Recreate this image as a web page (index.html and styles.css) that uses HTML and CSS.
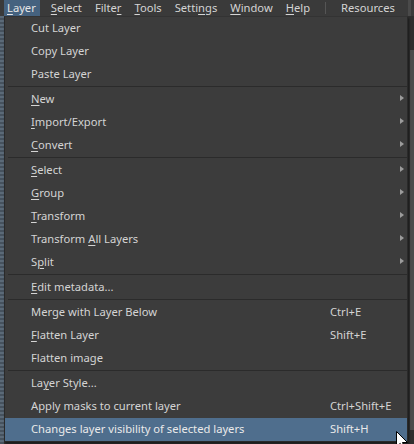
FILE: index.html
```html
<!DOCTYPE html>
<html>
<head>
<meta charset="utf-8">
<link rel="stylesheet" href="styles.css">
</head>
<body>
<div class="menubar">
  <span class="mb-item active"><u>L</u>ayer</span>
  <span class="mb-item"><u>S</u>elect</span>
  <span class="mb-item">Filte<u>r</u></span>
  <span class="mb-item"><u>T</u>ools</span>
  <span class="mb-item">Setti<u>n</u>gs</span>
  <span class="mb-item"><u>W</u>indow</span>
  <span class="mb-item"><u>H</u>elp</span>
  <span class="mb-sep"></span>
  <span class="mb-item">Resources</span>
  <span class="mb-tail"></span>
</div>
<div class="workspace">
  <div class="left-strip"></div>
  <div class="menu">
    <div class="row"><span class="label">Cut Layer</span></div>
    <div class="row"><span class="label">Copy Layer</span></div>
    <div class="row"><span class="label">Paste Layer</span></div>
    <div class="sep"></div>
    <div class="row"><span class="label"><u>N</u>ew</span><span class="arrow"></span></div>
    <div class="row"><span class="label"><u>I</u>mport/Export</span><span class="arrow"></span></div>
    <div class="row"><span class="label"><u>C</u>onvert</span><span class="arrow"></span></div>
    <div class="sep"></div>
    <div class="row"><span class="label"><u>S</u>elect</span><span class="arrow"></span></div>
    <div class="row"><span class="label"><u>G</u>roup</span><span class="arrow"></span></div>
    <div class="row"><span class="label"><u>T</u>ransform</span><span class="arrow"></span></div>
    <div class="row"><span class="label">Transform <u>A</u>ll Layers</span><span class="arrow"></span></div>
    <div class="row"><span class="label">S<u>p</u>lit</span><span class="arrow"></span></div>
    <div class="sep"></div>
    <div class="row"><span class="label"><u>E</u>dit metadata...</span></div>
    <div class="sep"></div>
    <div class="row"><span class="label">Merge with Layer Below</span><span class="key">Ctrl+E</span></div>
    <div class="row"><span class="label"><u>F</u>latten Layer</span><span class="key">Shift+E</span></div>
    <div class="row"><span class="label">Flatten image</span></div>
    <div class="sep"></div>
    <div class="row"><span class="label">La<u>y</u>er Style...</span></div>
    <div class="row"><span class="label">Apply masks to current layer</span><span class="key">Ctrl+Shift+E</span></div>
    <div class="row hover"><span class="label">Changes layer visibility of selected layers</span><span class="key">Shift+H</span>
      <svg class="cursor" width="14" height="20" viewBox="0 0 14 20"><path d="M0.5 0.5 L0.5 16 L4.2 12.4 L6.8 18.5 L9 17.5 L6.5 11.5 L11.5 11.5 Z" fill="#fff" stroke="#000" stroke-width="1"/></svg>
    </div>
  </div>
  <div class="right-area">
    <div class="scroll-track"><div class="scroll-thumb"></div></div>
  </div>
</div>
</body>
</html>
```
FILE: styles.css
```css
html, body {
  margin: 0;
  padding: 0;
  background: #323232;
  overflow: hidden;
}
body {
  width: 414px;
  height: 444px;
  font-family: "Noto Sans", "Open Sans", sans-serif;
  font-size: 11.2px;
  color: #d4d4d4;
}
u {
  text-decoration: underline;
  text-underline-offset: 2px;
  text-decoration-thickness: 1px;
}
.menubar {
  height: 16px;
  display: flex;
  align-items: center;
  background: #3a3a3a;
  padding-left: 4px;
  line-height: 15px;
  white-space: nowrap;
}
.mb-item {
  margin-right: 13px;
  height: 16px;
}
.mb-item.active {
  background: #45627f;
  color: #e6e6e6;
  padding: 0 4px 0 3px;
  margin-right: 11px;
}
.mb-sep {
  width: 1px;
  height: 12px;
  background: #555;
  margin: 0 15px 0 2px;
}
.mb-tail {
  width: 3px;
  height: 16px;
  background: #4a4a4a;
  flex-shrink: 0;
}
.workspace {
  display: flex;
  height: 428px;
}
.left-strip {
  width: 4px;
  background: repeating-linear-gradient(180deg, #5b6a78 0 2px, #46525e 2px 4px);
}
.menu {
  width: 402px;
  height: 424px;
  background: #3c3c3c;
  border: 1px solid #2a2a2a;
  border-top: 1px solid #333;
  box-shadow: 1px 2px 2px rgba(0,0,0,0.45);
  position: relative;
  z-index: 1;
}
.row {
  box-sizing: border-box;
  height: 23px;
  display: flex;
  align-items: center;
  padding: 0 0 2px 26px;
  position: relative;
}
.row.hover {
  background: #4f6e8d;
  color: #eaeaea;
}
.label {
  white-space: nowrap;
}
.key {
  position: absolute;
  left: 325px;
  top: 3px;
  white-space: nowrap;
}
.arrow {
  position: absolute;
  left: 395px;
  top: 7px;
  width: 0;
  height: 0;
  border-top: 3.5px solid transparent;
  border-bottom: 3.5px solid transparent;
  border-left: 4px solid #9c9c9c;
}
.sep {
  height: 1px;
  margin: 0 0 1px 3px;
  background: #2b2b2b;
}
.cursor {
  position: absolute;
  left: 391px;
  top: 13px;
}
.right-area {
  flex: 1;
  background: #2e2e2e;
  display: flex;
  justify-content: flex-end;
}
.scroll-track {
  width: 4px;
  background: #2e2e2e;
  padding-top: 34px;
}
.scroll-thumb {
  width: 4px;
  height: 380px;
  background: #4c4c4c;
}
```
